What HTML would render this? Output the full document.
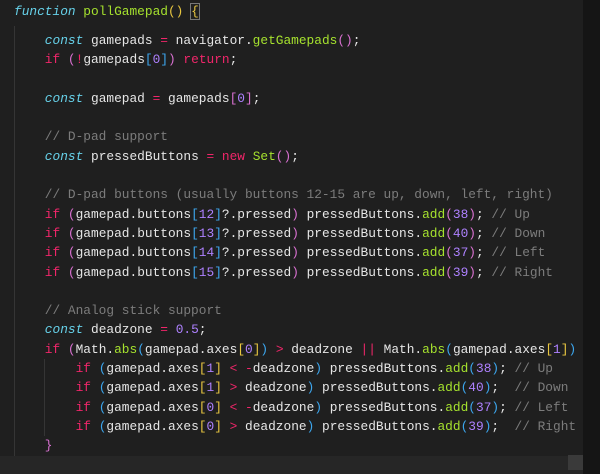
<!DOCTYPE html>
<html><head><style>
html,body{margin:0;padding:0;width:600px;height:474px;overflow:hidden;background:#1f1f1f;}
.ed{position:absolute;left:0;top:0;width:583px;height:474px;background:#1f1f1f;overflow:hidden;}
.strip{position:absolute;left:583px;top:0;width:17px;height:474px;background:#151515;}
.hs{position:absolute;left:0;top:456px;width:583px;height:18px;background:#262626;}
.thumb{position:absolute;left:568px;top:455px;width:15px;height:15px;background:#3a3a3a;}
.g1{position:absolute;left:14px;top:26px;width:1px;height:430px;background:#353535;}
.g2{position:absolute;left:44px;top:359px;width:1px;height:77px;background:#353535;}
pre{position:absolute;left:14px;margin:0;font-family:"Liberation Mono",monospace;font-size:12.83px;line-height:19.3px;color:#e6e6e6;white-space:pre;}
#h{top:2px;}
#m{top:31px;}
.k{color:#66d0e8;font-style:italic}.f{color:#a6e22e}.p{color:#f0266a}.n{color:#ae81ff}
.c{color:#7c7c7c}.y{color:#e8c640}.o{color:#d870d0}.b{color:#3ca6ee}
.box{outline:1px solid #777;}
</style></head><body>
<div class="ed">
<div class="g1"></div><div class="g2"></div>
<pre id="h"><span class="k">function</span> <span class="f">pollGamepad</span><span class="y">()</span> <span class="y box">{</span></pre>
<pre id="m">    <span class="k">const</span> gamepads <span class="p">=</span> navigator.<span class="f">getGamepads</span><span class="o">()</span>;
    <span class="p">if</span> <span class="o">(</span><span class="p">!</span>gamepads<span class="b">[</span><span class="n">0</span><span class="b">]</span><span class="o">)</span> <span class="p">return</span>;

    <span class="k">const</span> gamepad <span class="p">=</span> gamepads<span class="o">[</span><span class="n">0</span><span class="o">]</span>;

    <span class="c">// D-pad support</span>
    <span class="k">const</span> pressedButtons <span class="p">=</span> <span class="p">new</span> <span class="f">Set</span><span class="o">()</span>;

    <span class="c">// D-pad buttons (usually buttons 12-15 are up, down, left, right)</span>
    <span class="p">if</span> <span class="o">(</span>gamepad.buttons<span class="b">[</span><span class="n">12</span><span class="b">]</span>?.pressed<span class="o">)</span> pressedButtons.<span class="f">add</span><span class="o">(</span><span class="n">38</span><span class="o">)</span>; <span class="c">// Up</span>
    <span class="p">if</span> <span class="o">(</span>gamepad.buttons<span class="b">[</span><span class="n">13</span><span class="b">]</span>?.pressed<span class="o">)</span> pressedButtons.<span class="f">add</span><span class="o">(</span><span class="n">40</span><span class="o">)</span>; <span class="c">// Down</span>
    <span class="p">if</span> <span class="o">(</span>gamepad.buttons<span class="b">[</span><span class="n">14</span><span class="b">]</span>?.pressed<span class="o">)</span> pressedButtons.<span class="f">add</span><span class="o">(</span><span class="n">37</span><span class="o">)</span>; <span class="c">// Left</span>
    <span class="p">if</span> <span class="o">(</span>gamepad.buttons<span class="b">[</span><span class="n">15</span><span class="b">]</span>?.pressed<span class="o">)</span> pressedButtons.<span class="f">add</span><span class="o">(</span><span class="n">39</span><span class="o">)</span>; <span class="c">// Right</span>

    <span class="c">// Analog stick support</span>
    <span class="k">const</span> deadzone <span class="p">=</span> <span class="n">0.5</span>;
    <span class="p">if</span> <span class="o">(</span>Math.<span class="f">abs</span><span class="b">(</span>gamepad.axes<span class="y">[</span><span class="n">0</span><span class="y">]</span><span class="b">)</span> <span class="p">&gt;</span> deadzone <span class="p">||</span> Math.<span class="f">abs</span><span class="b">(</span>gamepad.axes<span class="y">[</span><span class="n">1</span><span class="y">]</span><span class="b">)</span>
        <span class="p">if</span> <span class="b">(</span>gamepad.axes<span class="y">[</span><span class="n">1</span><span class="y">]</span> <span class="p">&lt;</span> <span class="p">-</span>deadzone<span class="b">)</span> pressedButtons.<span class="f">add</span><span class="b">(</span><span class="n">38</span><span class="b">)</span>; <span class="c">// Up</span>
        <span class="p">if</span> <span class="b">(</span>gamepad.axes<span class="y">[</span><span class="n">1</span><span class="y">]</span> <span class="p">&gt;</span> deadzone<span class="b">)</span> pressedButtons.<span class="f">add</span><span class="b">(</span><span class="n">40</span><span class="b">)</span>;  <span class="c">// Down</span>
        <span class="p">if</span> <span class="b">(</span>gamepad.axes<span class="y">[</span><span class="n">0</span><span class="y">]</span> <span class="p">&lt;</span> <span class="p">-</span>deadzone<span class="b">)</span> pressedButtons.<span class="f">add</span><span class="b">(</span><span class="n">37</span><span class="b">)</span>; <span class="c">// Left</span>
        <span class="p">if</span> <span class="b">(</span>gamepad.axes<span class="y">[</span><span class="n">0</span><span class="y">]</span> <span class="p">&gt;</span> deadzone<span class="b">)</span> pressedButtons.<span class="f">add</span><span class="b">(</span><span class="n">39</span><span class="b">)</span>;  <span class="c">// Right</span>
    <span class="o">}</span></pre>
<div class="hs"></div>
<div class="thumb"></div>
</div>
<div class="strip"></div>
</body></html>
